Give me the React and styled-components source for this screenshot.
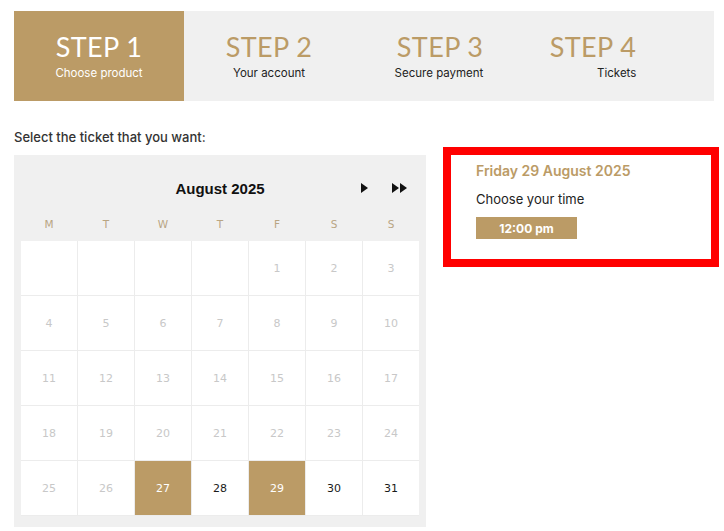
import styled, { createGlobalStyle } from "styled-components";

const GOLD = "#bb9b66";

const Global = createGlobalStyle`
  body {
    margin: 0;
    background: #fff;
    font-family: Inter, "Liberation Sans", sans-serif;
  }
`;

const Page = styled.div`
  padding: 11px 0 0 14px;
`;

const Steps = styled.div`
  display: flex;
  width: 700px;
  height: 90px;
  background: #f0f0f0;
`;

const Step = styled.div`
  width: 170px;
  display: flex;
  flex-direction: column;
  align-items: center;
  justify-content: center;
  padding: ${(p) => p.$pad || "0"};
  box-sizing: border-box;
  background: ${(p) => (p.$active ? GOLD : "transparent")};
`;

const StepInner = styled.div`
  display: flex;
  flex-direction: column;
  align-items: ${(p) => p.$align || "center"};
  margin-top: 2px;
`;

const StepTitle = styled.div`
  font-family: Lato, "Open Sans", sans-serif;
  font-size: 27px;
  line-height: 28px;
  letter-spacing: 0.4px;
  color: ${(p) => (p.$active ? "#fff" : GOLD)};
`;

const StepSub = styled.div`
  font-size: 11.5px;
  line-height: 16px;
  margin-top: 4px;
  color: ${(p) => (p.$active ? "#fff" : "#222")};
`;

const Body = styled.div`
  display: flex;
  align-items: flex-start;
  gap: 17px;
  margin-top: 27px;
`;

const Label = styled.div`
  font-size: 13px;
  font-weight: 500;
  line-height: 18px;
  color: #333;
  margin-bottom: 9px;
`;

const Calendar = styled.div`
  width: 412px;
  background: #f0f0f0;
  padding: 15px 7px 11px;
  box-sizing: border-box;
`;

const CalHead = styled.div`
  position: relative;
  height: 36px;
  display: flex;
  align-items: center;
  justify-content: center;
  font-family: "Liberation Sans", Arial, sans-serif;
  font-weight: bold;
  font-size: 15px;
  color: #111;
`;

const Arrows = styled.div`
  position: absolute;
  right: 12px;
  top: 13px;
  display: flex;
  gap: 23px;
`;

const Weekdays = styled.div`
  display: grid;
  grid-template-columns: repeat(7, 56px);
  column-gap: 1px;
  height: 35px;
  align-items: center;
`;

const Weekday = styled.div`
  text-align: center;
  font-family: "DejaVu Sans", Verdana, sans-serif;
  font-size: 10.5px;
  color: #b9a583;
`;

const Grid = styled.div`
  display: grid;
  grid-template-columns: repeat(7, 56px);
  grid-auto-rows: 54px;
  gap: 1px;
  background: #ececec;
  padding-bottom: 1px;
`;

const Day = styled.div`
  display: flex;
  align-items: center;
  justify-content: center;
  font-family: "DejaVu Sans", Verdana, sans-serif;
  font-size: 11px;
  background: ${(p) => (p.$selected ? GOLD : "#fff")};
  color: ${(p) => (p.$selected ? "#fff" : p.$enabled ? "#1a1a1a" : "#c8c8c8")};
`;

const TimeBox = styled.div`
  margin-top: 19px;
  width: 276px;
  flex-shrink: 0;
  box-sizing: border-box;
  border: 8px solid #ff0000;
  padding: 6px 25px 20px;
`;

const DateTitle = styled.div`
  font-size: 14px;
  font-weight: 600;
  line-height: 20px;
  color: ${GOLD};
`;

const TimeLabel = styled.div`
  font-size: 13px;
  line-height: 20px;
  color: #222;
  margin-top: 8px;
`;

const TimeButton = styled.button`
  display: block;
  margin-top: 8px;
  width: 101px;
  height: 22px;
  border: none;
  background: ${GOLD};
  color: #fff;
  font-family: Inter, "Liberation Sans", sans-serif;
  font-weight: 700;
  font-size: 12px;
  padding: 0;
`;

const Tri = ({ n }) => (
  <svg width={n * 8} height="10" viewBox={`0 0 ${n * 8} 10`}>
    {Array.from({ length: n }).map((_, i) => (
      <polygon key={i} points={`${i * 8 + 1},0 ${i * 8 + 8},5 ${i * 8 + 1},10`} fill="#111" />
    ))}
  </svg>
);

const steps = [
  { t: "STEP 1", s: "Choose product", active: true },
  { t: "STEP 2", s: "Your account" },
  { t: "STEP 3", s: "Secure payment", align: "flex-end" },
  { t: "STEP 4", s: "Tickets", align: "flex-end", pad: "0 32px 0 0" },
];

const days = [
  ...Array(4).fill(null),
  ...Array.from({ length: 31 }, (_, i) => i + 1),
];

export default function App() {
  return (
    <Page>
      <Global />
      <Steps>
        {steps.map((st) => (
          <Step key={st.t} $active={st.active} $pad={st.pad}>
            <StepInner $align={st.align}>
              <StepTitle $active={st.active}>{st.t}</StepTitle>
              <StepSub $active={st.active}>{st.s}</StepSub>
            </StepInner>
          </Step>
        ))}
      </Steps>
      <Body>
        <div>
          <Label>Select the ticket that you want:</Label>
          <Calendar>
            <CalHead>
              August 2025
              <Arrows>
                <Tri n={1} />
                <Tri n={2} />
              </Arrows>
            </CalHead>
            <Weekdays>
              {["M", "T", "W", "T", "F", "S", "S"].map((d, i) => (
                <Weekday key={i}>{d}</Weekday>
              ))}
            </Weekdays>
            <Grid>
              {days.map((d, i) => (
                <Day
                  key={i}
                  $selected={d === 27 || d === 29}
                  $enabled={d >= 27}
                >
                  {d}
                </Day>
              ))}
            </Grid>
          </Calendar>
        </div>
        <TimeBox>
          <DateTitle>Friday 29 August 2025</DateTitle>
          <TimeLabel>Choose your time</TimeLabel>
          <TimeButton>12:00 pm</TimeButton>
        </TimeBox>
      </Body>
    </Page>
  );
}
